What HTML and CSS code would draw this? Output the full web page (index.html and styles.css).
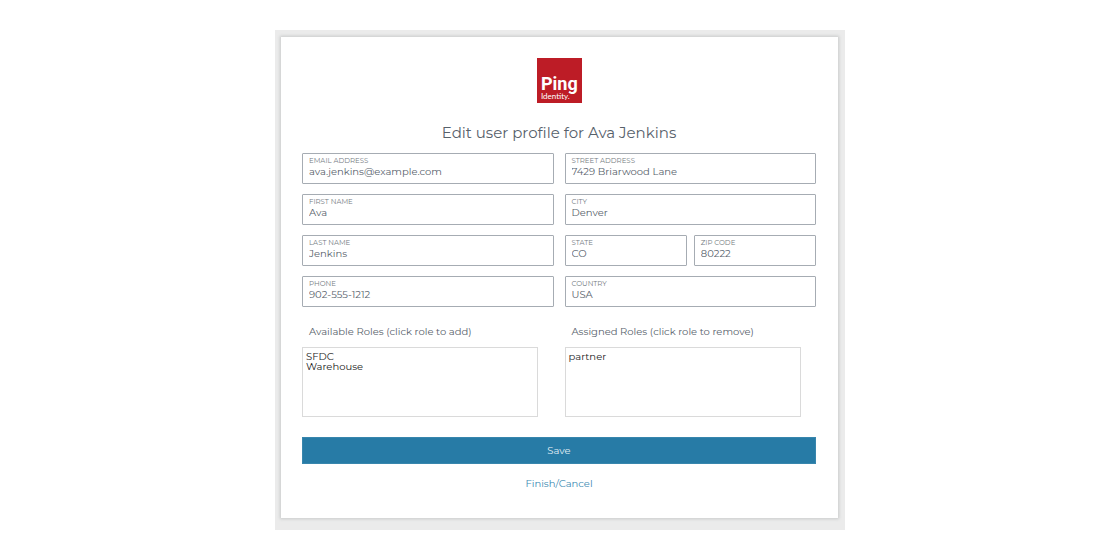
FILE: index.html
```html
<!DOCTYPE html>
<html lang="en">
<head>
<meta charset="utf-8">
<meta name="viewport" content="width=device-width, initial-scale=1">
<title>Edit user profile</title>
<link rel="stylesheet" href="styles.css">
</head>
<body>
<main class="stage">
  <form class="card">
    <svg class="logo" viewBox="0 0 46 46" role="img" aria-label="Ping Identity">
      <rect x="1" width="45" height="45" fill="#bd1c26"/>
      <text class="logo-name" x="5" y="32">Ping</text>
      <text class="logo-sub" x="5" y="41">Identity.</text>
    </svg>
    <h1 class="title">Edit user profile for Ava Jenkins</h1>
    <div class="columns">
      <div class="column">
        <div class="field"><label for="email">EMAIL ADDRESS</label><input id="email" type="text" value="ava.jenkins@example.com"></div>
        <div class="field"><label for="first">FIRST NAME</label><input id="first" type="text" value="Ava"></div>
        <div class="field"><label for="last">LAST NAME</label><input id="last" type="text" value="Jenkins"></div>
        <div class="field"><label for="phone">PHONE</label><input id="phone" type="text" value="902-555-1212"></div>
      </div>
      <div class="column">
        <div class="field"><label for="street">STREET ADDRESS</label><input id="street" type="text" value="7429 Briarwood Lane"></div>
        <div class="field"><label for="city">CITY</label><input id="city" type="text" value="Denver"></div>
        <div class="pair">
          <div class="field"><label for="state">STATE</label><input id="state" type="text" value="CO"></div>
          <div class="field"><label for="zip">ZIP CODE</label><input id="zip" type="text" value="80222"></div>
        </div>
        <div class="field"><label for="country">COUNTRY</label><input id="country" type="text" value="USA"></div>
      </div>
    </div>
    <div class="columns roles">
      <div class="role-group">
        <label for="available">Available Roles (click role to add)</label>
        <select id="available" class="role-list" multiple><option>SFDC</option><option>Warehouse</option></select>
      </div>
      <div class="role-group">
        <label for="assigned">Assigned Roles (click role to remove)</label>
        <select id="assigned" class="role-list" multiple><option>partner</option></select>
      </div>
    </div>
    <button class="save" type="button">Save</button>
    <a class="cancel" href="#">Finish/Cancel</a>
  </form>
</main>
</body>
</html>
```
FILE: styles.css
```css
* {
  box-sizing: border-box;
}

body {
  margin: 0;
  padding: 30px 0;
  background: #fff;
  color: #57616b;
  font-family: Montserrat, Inter, sans-serif;
  font-size: 10px;
}

.stage {
  max-width: 570px;
  margin: 0 auto;
  padding: 7px 7px 12px 6px;
  background: #ebebeb;
}

.card {
  display: flex;
  flex-direction: column;
  padding: 21px 22px 27px 21px;
  background: #fff;
  box-shadow: 0 0 3px 1px #c8caca;
}

.logo {
  width: 46px;
  height: 46px;
  align-self: center;
}

.logo-name {
  fill: #fff;
  font-family: Roboto, sans-serif;
  font-size: 18px;
  font-weight: 700;
}

.logo-sub {
  fill: #fff;
  font-family: Lato, sans-serif;
  font-size: 8px;
}

.title {
  margin: 19px 0 10px;
  font-size: 15px;
  font-weight: 400;
  line-height: 20px;
  text-align: center;
}

.columns {
  display: grid;
  grid-template-columns: 1fr 1fr;
  gap: 11px;
}

.column {
  display: grid;
  gap: 10px;
}

.pair {
  display: grid;
  grid-template-columns: 1fr 1fr;
  gap: 7px;
}

.field {
  display: flex;
  flex-direction: column;
  min-width: 0;
  padding: 2px 6px 5px;
  border: 1px solid #a6acb3;
  border-radius: 1px;
}

.field label {
  color: #747b82;
  font-size: 7px;
  line-height: 10px;
}

.field input {
  width: 100%;
  height: 12px;
  padding: 0;
  border: 0;
  background: none;
  color: #57616b;
  font: inherit;
  line-height: 12px;
}

.roles {
  margin-top: 18px;
}

.role-group label {
  display: block;
  margin: 0 0 8px 7px;
  line-height: 14px;
}

.role-list {
  display: block;
  width: 94%;
  height: 70px;
  padding: 2px 3px;
  border: 1px solid #dadada;
  border-radius: 0;
  background: #fff;
  color: #222;
  font: inherit;
}

.role-list option {
  display: block;
  height: 10px;
  min-height: 0;
  padding: 0;
  line-height: 10px;
}

.save {
  height: 27px;
  margin-top: 20px;
  padding: 0;
  border: 1px solid #3886ad;
  background: #277ba6;
  color: #e3eff5;
  font: inherit;
}

.cancel {
  align-self: center;
  margin-top: 13px;
  color: #3d8bb3;
  line-height: 14px;
  text-decoration: none;
}
```
